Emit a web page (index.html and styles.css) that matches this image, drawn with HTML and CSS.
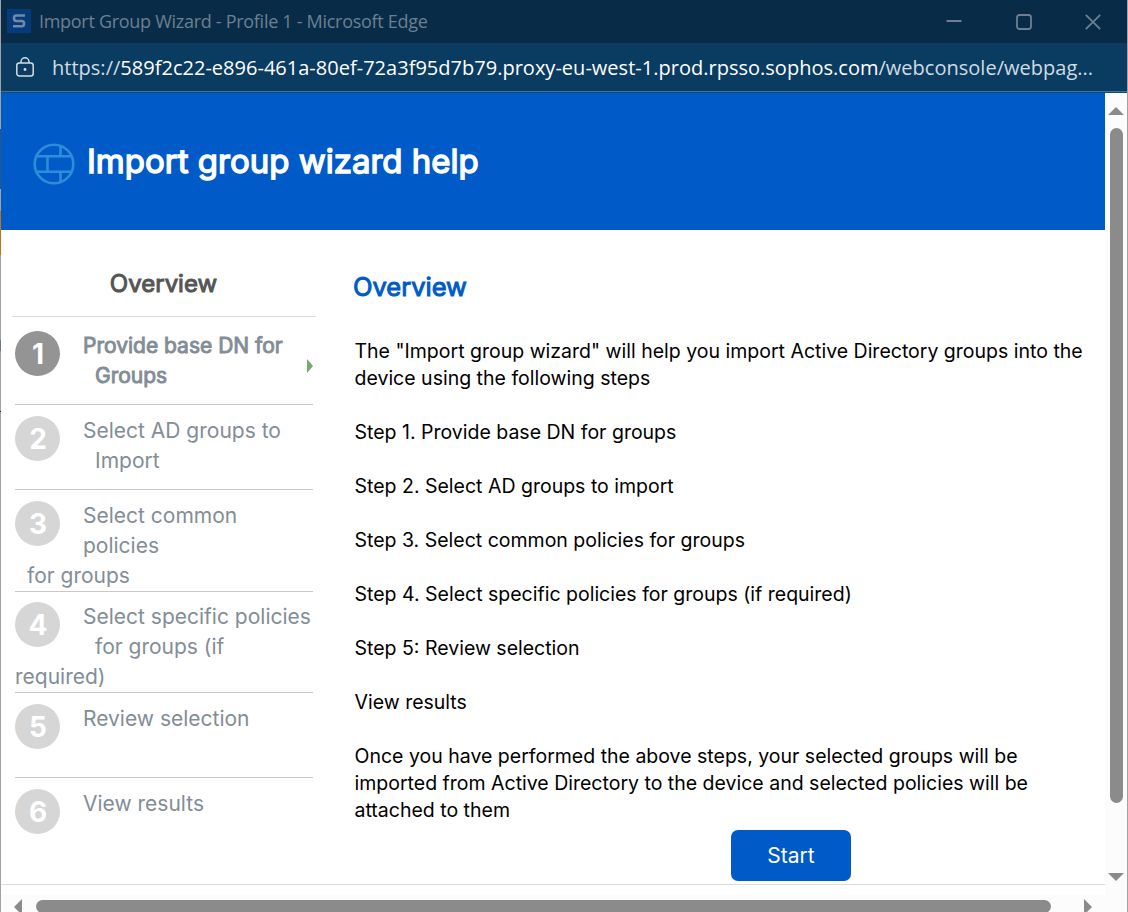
FILE: index.html
```
<!DOCTYPE html>
<html lang="en">
<head>
<meta charset="utf-8">
<title>Import Group Wizard</title>
<link rel="stylesheet" href="styles.css">
</head>
<body>
<div class="window">
  <header class="titlebar">
    <svg class="favicon" width="24" height="24" viewBox="0 0 24 24"><rect width="24" height="24" fill="#053b78"/><path d="M18 6.500H9.200Q7 6.500 7 9v.6Q7 12 9.200 12h5.600Q17 12 17 14.200v.6Q17 17.300 14.800 17.300H6" fill="none" stroke="#6f8aa3" stroke-width="2.600"/></svg>
    <span class="window-title">Import Group Wizard - Profile 1 - Microsoft Edge</span>
    <div class="controls">
      <svg width="16" height="16" viewBox="0 0 16 16"><path d="M0.500 7h15" stroke="#6c8091" stroke-width="2"/></svg>
      <svg width="16" height="16" viewBox="0 0 16 16"><rect x="1" y="1" width="14" height="14" rx="2.500" fill="none" stroke="#6c8091" stroke-width="1.800"/></svg>
      <svg width="16" height="16" viewBox="0 0 16 16"><path d="M.8.8l14.400 14.400M15.200.8L.8 15.200" stroke="#6c8091" stroke-width="1.800"/></svg>
    </div>
  </header>
  <div class="address">
    <svg class="lock" width="20" height="22" viewBox="0 0 20 22"><rect x="1.800" y="6" width="16.400" height="13" rx="2.500" fill="none" stroke="#d3dde4" stroke-width="1.500"/><path d="M6 6V4.800a4 4 0 0 1 8 0V6" fill="none" stroke="#d3dde4" stroke-width="1.500"/><circle cx="10" cy="12.500" r="1.400" fill="#d3dde4"/></svg>
    <span class="url">https://<b class="host">589f2c22-e896-461a-80ef-72a3f95d7b79.proxy-eu-west-1.prod.rpsso.sophos.com</b>/webconsole/webpag...</span>
  </div>
  <div class="viewport">
    <div class="page">
      <div class="banner">
        <svg class="globe" width="42" height="42" viewBox="0 0 42 42" fill="none" stroke="#2a8fd6" stroke-width="2.600"><circle cx="21" cy="21" r="19.300"/><path d="M4 13.300h34M4 28.700h34M27.500 3v10M14.500 13v16M27.500 29v10"/></svg>
        <h1 class="banner-title">Import group wizard help</h1>
      </div>
      <div class="content">
        <aside class="sidebar">
          <h2 class="side-title">Overview</h2>
          <ol class="steps">
            <li class="step active"><span class="num">1</span>Provide base DN for<br><span class="indent">Groups</span><svg class="marker" width="6" height="14" viewBox="0 0 6 14"><path d="M0 0l6 7-6 7z" fill="#73ab69"/></svg></li>
            <li class="step"><span class="num">2</span>Select AD groups to<br><span class="indent">Import</span></li>
            <li class="step"><span class="num">3</span>Select common<br>policies<br><span class="indent">for groups</span></li>
            <li class="step long"><span class="num">4</span>Select specific policies<br><span class="indent">for groups (if</span><br>required)</li>
            <li class="step"><span class="num">5</span>Review selection</li>
            <li class="step last"><span class="num">6</span>View results</li>
          </ol>
        </aside>
        <main class="main">
          <h2 class="main-title">Overview</h2>
          <p class="para">The "Import group wizard" will help you import Active Directory groups into the<br>device using the following steps</p>
          <p class="para">Step 1. Provide base DN for groups</p>
          <p class="para">Step 2. Select AD groups to import</p>
          <p class="para">Step 3. Select common policies for groups</p>
          <p class="para">Step 4. Select specific policies for groups (if required)</p>
          <p class="para">Step 5: Review selection</p>
          <p class="para">View results</p>
          <p class="para">Once you have performed the above steps, your selected groups will be<br>imported from Active Directory to the device and selected policies will be<br>attached to them</p>
          <button class="start">Start</button>
        </main>
      </div>
    </div>
    <div class="vscroll">
      <svg width="16" height="8" viewBox="0 0 16 8"><path d="M8 0l8 8H0z" fill="#8b8b8b"/></svg>
      <div class="vthumb"></div>
      <svg class="down" width="16" height="8" viewBox="0 0 16 8"><path d="M0 0h16L8 8z" fill="#8b8b8b"/></svg>
    </div>
    <div class="hscroll">
      <svg width="8" height="16" viewBox="0 0 8 16"><path d="M8 0v16L0 8z" fill="#8b8b8b"/></svg>
      <div class="hthumb"></div>
      <svg class="right" width="8" height="16" viewBox="0 0 8 16"><path d="M0 0v16l8-8z" fill="#8b8b8b"/></svg>
    </div>
  </div>
</div>
</body>
</html>
```
FILE: styles.css
```
* { box-sizing: border-box; }
body { margin: 0; width: 1128px; height: 912px; overflow: hidden; font-family: Inter, "Liberation Sans", sans-serif; }
h1, h2, p, ol { margin: 0; padding: 0; }
/* The side padding shows the strip of desktop behind the window. */
.window {
  height: 912px; display: flex; flex-direction: column; padding: 0 1px;
  background: linear-gradient(#a2a2a2 129px, #2c5585 129px 189px, #a2a2a2 189px 211px, #b9771c 211px 255px, #a2a2a2 255px 340px, #6b7783 340px 351px, #a2a2a2 351px 411px, #222 411px 412px, #a2a2a2 412px) 0 0 / 1px 100% no-repeat, #a2a2a2;
}
.titlebar { height: 43px; flex: none; display: flex; align-items: center; background: #082b47; padding: 0 26px 0 6px; }
.favicon { margin: -2px 8px 0 0; }
.window-title { font: 18px/43px "Open Sans", sans-serif; letter-spacing: -.29px; color: #6c8091; white-space: nowrap; }
.controls { margin-left: auto; display: flex; gap: 53.500px; }
.address { height: 50px; flex: none; display: flex; align-items: center; background: #0a3b61; padding: 0 0 0 14px; border-bottom: 1px solid #0a4a80; box-shadow: inset 0 -1px #437397; }
.lock { margin-right: 17px; }
.url { font: 20px/48px "Open Sans", sans-serif; letter-spacing: .015px; color: #d0dbe3; white-space: nowrap; }
.host { font-weight: 400; color: #fff; }
.viewport { flex: 1; min-height: 0; display: grid; grid-template: 802px 17px / 1104px 22px; }
.page { overflow: hidden; background: #fff; }
.banner { height: 137px; background: #005bc8; display: flex; align-items: center; padding: 4px 0 0 32px; }
.banner-title { font-size: 33px; font-weight: 400; -webkit-text-stroke: 1.400px #fff; color: #fff; margin: -5px 0 0 12px; white-space: nowrap; }
.content { display: flex; height: 655px; border-bottom: 1px solid #dcdcdc; }
.sidebar { width: 304px; margin-left: 11px; flex: none; }
.side-title { height: 87px; line-height: 30px; padding: 39px 1px 0 0; border-bottom: 1px solid #dcdcdc; text-align: center; font-size: 24px; font-weight: 400; -webkit-text-stroke: 1px #555; color: #555; }
.steps { list-style: none; margin: 0 3px; }
.step { height: 85px; padding-top: 11px; border-bottom: 1px solid #c8c8c8; font-size: 21px; line-height: 30px; color: #828d96; white-space: nowrap; position: relative; }
.step:nth-child(3) { height: 102px; }
.step.long { height: 101px; padding-top: 10px; }
.step.active { height: 88px; padding-top: 14px; -webkit-text-stroke: .9px #828d96; }
.step.last { border: 0; }
.num { float: left; width: 45px; height: 45px; margin: 0 23px 14px 0; border-radius: 50%; background: #d6d6d6; color: #fff; text-align: center; font-size: 28px; font-weight: 700; line-height: 47px; padding-left: 1px; -webkit-text-stroke: 0; }
.active .num { background: #949494; }
.indent { padding-left: 12px; }
.marker { position: absolute; right: 0; top: 42px; }
.main { flex: 1; padding: 42px 0 0 38.500px; }
.main-title { font-size: 25.500px; line-height: 30px; font-weight: 400; color: #005bc8; -webkit-text-stroke: 1px #005bc8; margin: 0 0 36px -1.500px; }
.para { font-size: 19.500px; line-height: 27px; margin-bottom: 27px; color: #000; white-space: nowrap; }
.para:last-of-type { margin-bottom: 6px; }
.start { display: block; width: 120px; height: 51px; margin-left: 376.500px; border: 0; border-radius: 7px; background: #005bc8; color: #fff; font: 21px Inter, sans-serif; }
.vscroll { grid-row: 1 / 3; grid-column: 2; background: #fcfcfc; display: flex; flex-direction: column; align-items: center; padding-top: 14px; }
.vthumb { width: 13px; height: 675px; margin: 13px 0 70px; border-radius: 7px; background: #8b8b8b; }
.hscroll { background: #fcfcfc; display: flex; align-items: flex-start; padding: 4px 0 0 13px; overflow: hidden; }
.hthumb { flex: none; width: 1015px; height: 13px; margin: 1px 33px 0 14px; border-radius: 7px; background: #8b8b8b; }
```
